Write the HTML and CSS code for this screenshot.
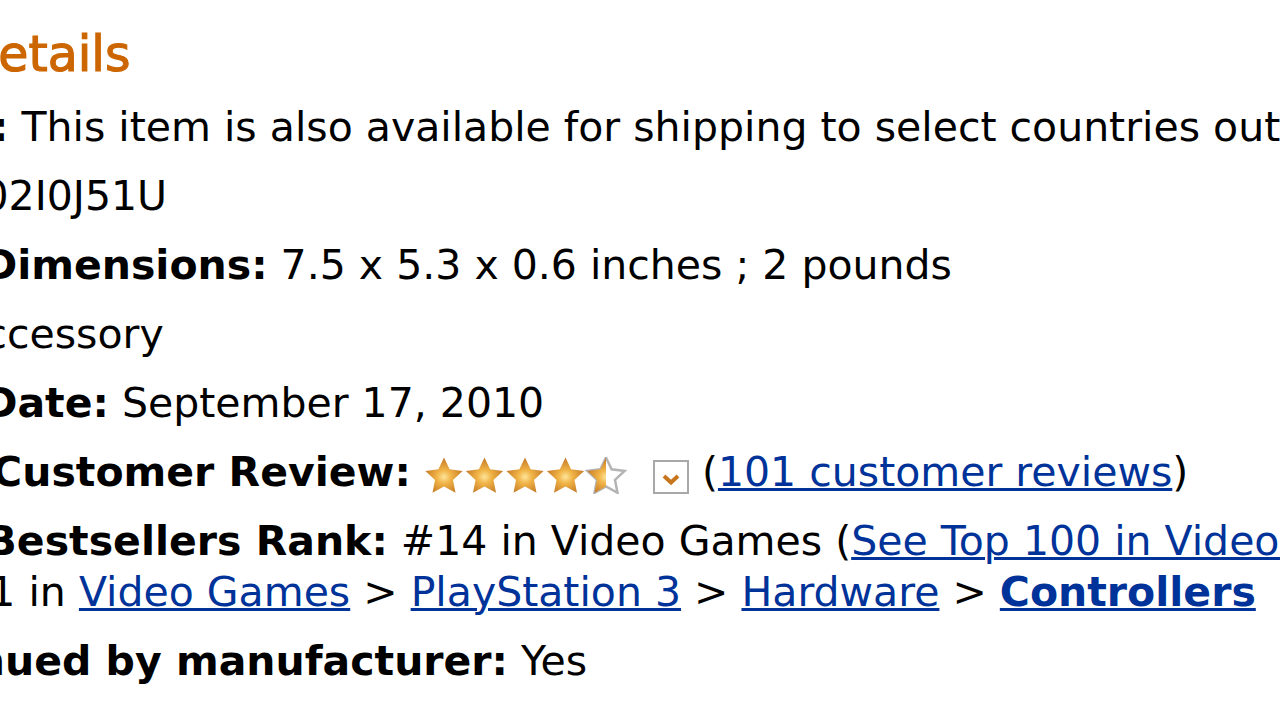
FILE: index.html
```html
<!DOCTYPE html>
<html>
<head>
<meta http-equiv="Content-Type" content="text/html;charset=UTF-8">
<link rel="stylesheet" href="styles.css">
</head>
<body>
<div class="productDetailsWrapper">
  <h2 class="detailsTitle">Product Details</h2>
  <ul class="detailsList">
    <li><b>Shipping:</b> This item is also available for shipping to select countries outside the U.S.</li>
    <li><b>ASIN:</b> B002I0J51U</li>
    <li><b>Product Dimensions:</b> 7.5 x 5.3 x 0.6 inches ; 2 pounds</li>
    <li><b>Media:</b> Accessory</li>
    <li><b>Release Date:</b> September 17, 2010</li>
    <li><b>Average Customer Review:</b>
      <svg class="stars" width="204" height="37" viewBox="0 0 204 37">
        <defs>
          <radialGradient id="starGold" cx="50%" cy="55%" r="55%">
            <stop offset="0" stop-color="#fde49a"/>
            <stop offset="0.35" stop-color="#f1b447"/>
            <stop offset="1" stop-color="#c27624"/>
          </radialGradient>
          <path id="star" d="M20 0.5 L25.6 12.3 L38.6 14 L29 22.9 L31.5 35.8 L20 29.5 L8.5 35.8 L11 22.9 L1.4 14 L14.4 12.3 Z"/>
          <clipPath id="halfStar"><rect x="162" y="0" width="20" height="37"/></clipPath>
        </defs>
        <use href="#star" fill="url(#starGold)"/>
        <use href="#star" x="40.5" fill="url(#starGold)"/>
        <use href="#star" x="81" fill="url(#starGold)"/>
        <use href="#star" x="121.5" fill="url(#starGold)"/>
        <use href="#star" x="162" fill="#fff" stroke="#b4b4b4" stroke-width="2.5"/>
        <g clip-path="url(#halfStar)"><use href="#star" x="162" fill="url(#starGold)"/></g>
      </svg>
      <span class="reviewDrop"><svg width="18" height="11" viewBox="0 0 18 11"><path d="M2 2 L9 8.5 L16 2" fill="none" stroke="#c7761e" stroke-width="4"/></svg></span>
      (<a href="#">101 customer reviews</a>)</li>
    <li><b>Amazon Bestsellers Rank:</b> #14 in Video Games (<a href="#">See Top 100 in Video Games</a>)
      <ul class="rankList">
        <li>#1 in <a href="#">Video Games</a> &gt; <a href="#">PlayStation 3</a> &gt; <a href="#">Hardware</a> &gt; <b><a href="#">Controllers</a></b></li>
      </ul>
    </li>
    <li><b>Discontinued by manufacturer:</b> Yes</li>
  </ul>
</div>
</body>
</html>
```

FILE: styles.css
```css
body{
  margin: 0;
  background-color: #fff;
  color: #000;
  font-family: "DejaVu Sans", Verdana, sans-serif;
  overflow: hidden;
}
.productDetailsWrapper{
  margin-left: -241px;
  padding-top: 25px;
  white-space: nowrap;
}
.detailsTitle{
  margin: 0 0 17px 0;
  font-size: 49px;
  line-height: 60px;
  font-weight: normal;
  color: #cc6600;
  -webkit-text-stroke: 1.2px #cc6600;
}
.detailsList{
  margin: 0 0 0 29px;
  padding: 0;
  list-style: none;
  font-size: 41px;
  line-height: 51px;
}
.detailsList > li{
  margin-bottom: 18px;
}
.rankList{
  margin: 0 0 0 167px;
  padding: 0;
  list-style: none;
}
a{
  color: #003399;
  text-decoration: underline;
  text-decoration-thickness: 3px;
}
.stars{
  vertical-align: -8px;
}
.reviewDrop{
  display: inline-block;
  box-sizing: border-box;
  width: 36px;
  height: 34px;
  margin-left: 12px;
  border: 2px solid #a8a8a8;
  background-color: #fff;
  vertical-align: -4px;
  text-align: center;
  line-height: 28px;
}
.reviewDrop svg{
  vertical-align: middle;
}
```
